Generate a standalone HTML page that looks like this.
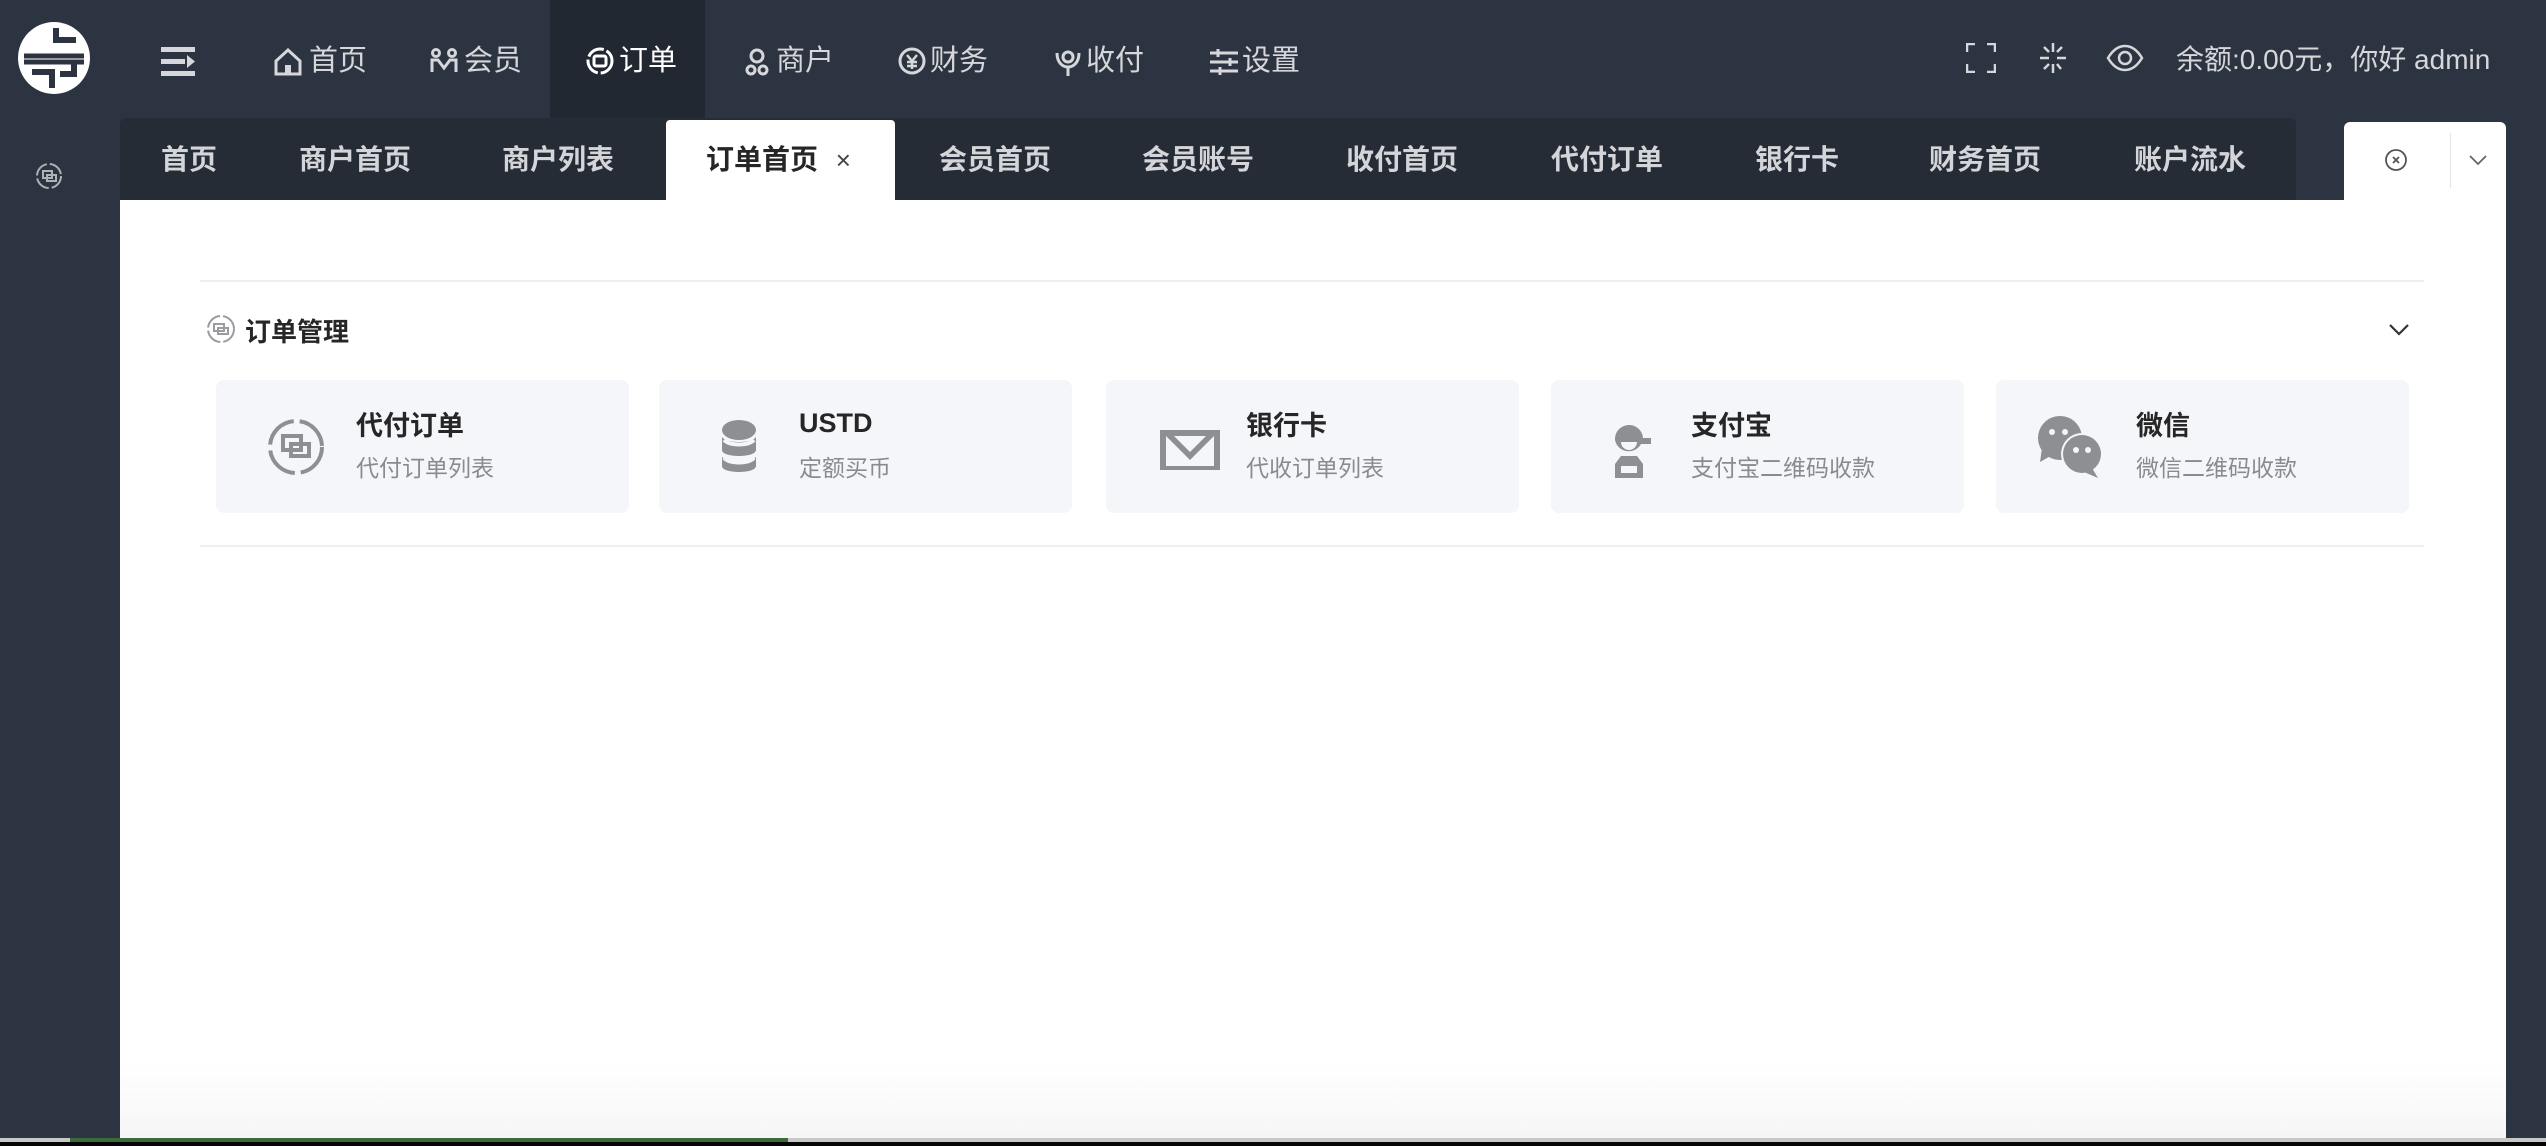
<!DOCTYPE html>
<html><head><meta charset="utf-8"><style>
*{margin:0;padding:0;box-sizing:border-box}
body{width:2546px;height:1146px;overflow:hidden;background:#2c3441;font-family:"Liberation Sans","Noto Sans CJK SC",sans-serif;position:relative}
.a{position:absolute}
.nav{top:0;height:118px;color:#d6d7da;font-size:29px;line-height:118px}
.nav svg{position:absolute;top:44px}
.tabbar{left:120px;top:118px;width:2176px;height:82px;background:#262c36;border-radius:6px 6px 0 0}
.tab{position:absolute;top:119px;height:82px;line-height:82px;color:#d3d5d9;font-size:28px;font-weight:bold}
.content{left:120px;top:200px;width:2386px;height:938px;background:linear-gradient(#fff 92%,#f6f6f6)}
.card{position:absolute;top:380px;width:413px;height:133px;background:#f5f6f9;border-radius:8px}
.card .t{position:absolute;left:140px;top:24px;font-size:27px;font-weight:bold;color:#262626}
.card .s{position:absolute;left:140px;top:69px;font-size:23px;color:#8a8b8f}
.card svg{position:absolute;left:50px;top:36px}
</style></head><body>
<!-- logo -->
<svg class="a" style="left:16px;top:20px" width="76" height="76" viewBox="0 0 76 76"><circle cx="38" cy="38" r="36" fill="#fff"/><path d="M8 36H68M8 42H68" stroke="#2c3441" stroke-width="5"/><path d="M40 8v12h20M36 68V52H16" stroke="#2c3441" stroke-width="6" fill="none"/><path d="M58 44v10H44" stroke="#2c3441" stroke-width="6" fill="none"/></svg>
<!-- sidebar icon -->
<svg class="a" style="left:34px;top:161px" width="30" height="30" viewBox="0 0 30 30"><circle cx="15" cy="15" r="12" fill="none" stroke="#aeb1b6" stroke-width="2" stroke-dasharray="16 3"/><rect x="9" y="10" width="9" height="7" fill="none" stroke="#aeb1b6" stroke-width="2"/><rect x="13" y="14" width="9" height="6" fill="none" stroke="#aeb1b6" stroke-width="2"/></svg>
<!-- top nav -->
<div class="a" style="left:550px;top:0;width:155px;height:118px;background:#222832"></div>
<svg class="a" style="left:161px;top:47px" width="35" height="29" viewBox="0 0 35 29"><rect y="0" width="34" height="5" fill="#d6d7da"/><rect y="12" width="24" height="5" fill="#d6d7da"/><rect y="24" width="34" height="5" fill="#d6d7da"/><path d="M26 8l8 6.5-8 6.5z" fill="#d6d7da"/></svg>
<div class="a nav" style="left:273px;width:120px;top:2px"><svg style="left:0;top:46px" width="30" height="28" viewBox="0 0 30 28"><path d="M3 13L15 2l12 11v13H3z" fill="none" stroke="#d6d7da" stroke-width="3"/><rect x="12" y="17" width="6" height="9" fill="#d6d7da"/></svg><span style="margin-left:36px">首页</span></div>
<div class="a nav" style="left:430px;width:120px;top:2px"><svg style="left:0;top:46px" width="28" height="26" viewBox="0 0 28 26"><circle cx="6" cy="5" r="3.5" fill="none" stroke="#d6d7da" stroke-width="3"/><circle cx="22" cy="5" r="3.5" fill="none" stroke="#d6d7da" stroke-width="3"/><path d="M2 24V12h6l6 8 6-8h6v12" fill="none" stroke="#d6d7da" stroke-width="3"/></svg><span style="margin-left:34px">会员</span></div>
<div class="a nav" style="left:586px;width:120px;color:#fff;top:2px"><svg style="left:0;top:45px" width="28" height="28" viewBox="0 0 28 28"><circle cx="14" cy="14" r="12" fill="none" stroke="#fff" stroke-width="3" stroke-dasharray="18 3"/><rect x="8" y="9" width="12" height="10" rx="2" fill="none" stroke="#fff" stroke-width="3"/></svg><span style="margin-left:33px">订单</span></div>
<div class="a nav" style="left:745px;width:120px;top:2px"><svg style="left:0;top:46px" width="24" height="28" viewBox="0 0 24 28"><circle cx="12" cy="8" r="6" fill="none" stroke="#d6d7da" stroke-width="3"/><circle cx="6" cy="22" r="4" fill="none" stroke="#d6d7da" stroke-width="3"/><circle cx="18" cy="22" r="4" fill="none" stroke="#d6d7da" stroke-width="3"/></svg><span style="margin-left:31px">商户</span></div>
<div class="a nav" style="left:898px;width:120px;top:2px"><svg style="left:0;top:45px" width="28" height="28" viewBox="0 0 28 28"><circle cx="14" cy="14" r="12" fill="none" stroke="#d6d7da" stroke-width="3"/><path d="M9 8l5 6 5-6M14 14v8M9 15h10M9 19h10" stroke="#d6d7da" stroke-width="2.5" fill="none"/></svg><span style="margin-left:32px">财务</span></div>
<div class="a nav" style="left:1054px;width:120px;top:2px"><svg style="left:0;top:45px" width="28" height="30" viewBox="0 0 28 30"><circle cx="14" cy="10" r="5" fill="none" stroke="#d6d7da" stroke-width="3"/><path d="M3 6c0 10 6 14 11 14s11-4 11-14M14 20v9" stroke="#d6d7da" stroke-width="3" fill="none"/></svg><span style="margin-left:32px">收付</span></div>
<div class="a nav" style="left:1210px;width:120px;top:2px"><svg style="left:0;top:47px" width="28" height="26" viewBox="0 0 28 26"><path d="M0 4h28M0 13h28M0 22h28" stroke="#d6d7da" stroke-width="3"/><path d="M8 0v8M20 9v8M10 18v8" stroke="#d6d7da" stroke-width="3"/></svg><span style="margin-left:32px">设置</span></div>
<!-- right header -->
<svg class="a" style="left:1966px;top:43px" width="30" height="30" viewBox="0 0 30 30" fill="none" stroke="#d6d7da" stroke-width="2.5"><path d="M1 9V1h8M21 1h8v8M29 21v8h-8M9 29H1v-8"/></svg>
<svg class="a" style="left:2038px;top:42px" width="30" height="32" viewBox="0 0 30 32" stroke="#d6d7da" stroke-width="2.5"><path d="M15 1v9M15 22v9M2 16h9M19 16h9M6 5l5 5M19 22l4 5M24 5l-5 5M6 27l5-5"/></svg>
<svg class="a" style="left:2106px;top:44px" width="38" height="28" viewBox="0 0 38 28" fill="none" stroke="#d6d7da" stroke-width="2.5"><path d="M2 14C8 4 14 2 19 2s11 2 17 12c-6 10-12 12-17 12S8 24 2 14z"/><circle cx="19" cy="14" r="6"/></svg>
<div class="a nav" style="left:2176px;top:1px;font-size:28px;color:#d6d7da;white-space:nowrap">余额:0.00元，你好 admin</div>
<!-- tabs -->
<div class="a tabbar"></div>
<div class="a" style="left:666px;top:120px;width:229px;height:80px;background:#fff;border-radius:4px 4px 0 0"></div>
<div class="tab" style="left:161px">首页</div>
<div class="tab" style="left:299px">商户首页</div>
<div class="tab" style="left:502px">商户列表</div>
<div class="tab" style="left:706px;color:#262626">订单首页 <span style="font-weight:normal;font-size:26px;margin-left:10px;color:#444">×</span></div>
<div class="tab" style="left:939px">会员首页</div>
<div class="tab" style="left:1142px">会员账号</div>
<div class="tab" style="left:1346px">收付首页</div>
<div class="tab" style="left:1551px">代付订单</div>
<div class="tab" style="left:1755px">银行卡</div>
<div class="tab" style="left:1929px">财务首页</div>
<div class="tab" style="left:2134px">账户流水</div>
<div class="a" style="left:2344px;top:122px;width:162px;height:78px;background:#fff;border-radius:6px 6px 0 0"></div>
<div class="a" style="left:2450px;top:133px;width:1px;height:55px;background:#e5e5e5"></div>
<svg class="a" style="left:2384px;top:148px" width="24" height="24" viewBox="0 0 24 24" fill="none" stroke="#555" stroke-width="1.8"><circle cx="12" cy="12" r="10"/><path d="M9 9l6 6M15 9l-6 6"/></svg>
<svg class="a" style="left:2468px;top:154px" width="20" height="12" viewBox="0 0 20 12" fill="none" stroke="#666" stroke-width="1.8"><path d="M2 2l8 8 8-8"/></svg>
<!-- content -->
<div class="a content"></div>
<div class="a" style="left:200px;top:280px;width:2224px;height:2px;background:#eeeff1"></div>
<svg class="a" style="left:205px;top:313px" width="32" height="32" viewBox="0 0 32 32" fill="none" stroke="#9a9ca0" stroke-width="2"><circle cx="16" cy="16" r="13" stroke-dasharray="18 3"/><rect x="9" y="11" width="10" height="7"/><rect x="13" y="15" width="10" height="6"/></svg>
<div class="a" style="left:245px;top:312px;font-size:26px;font-weight:bold;color:#262626">订单管理</div>
<svg class="a" style="left:2388px;top:323px" width="22" height="14" viewBox="0 0 22 14" fill="none" stroke="#333" stroke-width="2.2"><path d="M2 2l9 9 9-9"/></svg>
<div class="card" style="left:216px"><svg width="60" height="62" viewBox="0 0 60 62" fill="none" stroke="#8e8f93" stroke-width="4"><circle cx="30" cy="31" r="26" stroke-dasharray="36 6"/><rect x="17" y="20" width="18" height="14"/><rect x="25" y="28" width="18" height="12"/></svg><div class="t">代付订单</div><div class="s">代付订单列表</div></div>
<div class="card" style="left:659px"><svg width="60" height="62" viewBox="0 0 60 62"><g fill="#8e8f93"><ellipse cx="30" cy="14" rx="17" ry="10"/><path d="M13 20c0 8 34 8 34 0v14c0 8-34 8-34 0z"/><path d="M13 40c0 8 34 8 34 0v10c0 8-34 8-34 0z"/></g><path d="M15 24c6 6 24 6 30 0M15 42c6 6 24 6 30 0" stroke="#f5f6f9" stroke-width="4" fill="none"/></svg><div class="t" style="top:28px">USTD</div><div class="s">定额买币</div></div>
<div class="card" style="left:1106px"><svg width="64" height="62" viewBox="0 0 64 62"><rect x="4" y="14" width="60" height="40" fill="#8e8f93"/><path d="M10 20h48v30H10z" fill="#f5f6f9"/><path d="M10 20l24 24 24-24z" fill="#8e8f93"/><path d="M18 20l16 16 16-16z" fill="#f5f6f9"/></svg><div class="t">银行卡</div><div class="s">代收订单列表</div></div>
<div class="card" style="left:1551px"><svg width="60" height="62" viewBox="0 0 60 62"><g fill="#8e8f93"><path d="M14 24a14 14 0 1 1 28-2h8v6H40a14 14 0 0 1-26-4z"/><path d="M14 62V48l6-8h16l6 8v14z"/></g><path d="M20 26a8 8 0 0 0 16 0z" fill="#f5f6f9"/><rect x="20" y="50" width="16" height="7" fill="#f5f6f9"/></svg><div class="t">支付宝</div><div class="s">支付宝二维码收款</div></div>
<div class="card" style="left:1996px"><svg width="76" height="66" viewBox="0 0 76 66" style="left:40px;top:34px"><g fill="#8e8f93"><ellipse cx="24" cy="24" rx="22" ry="22"/><path d="M6 34l-2 14 14-8z"/></g><circle cx="46" cy="40" r="21" fill="#f5f6f9"/><g fill="#8e8f93"><circle cx="46" cy="40" r="19"/><path d="M56 54l6 10-14-6z"/></g><g fill="#f5f6f9"><circle cx="16" cy="18" r="3"/><circle cx="29" cy="18" r="3"/><circle cx="40" cy="36" r="3"/><circle cx="52" cy="36" r="3"/></g></svg><div class="t">微信</div><div class="s">微信二维码收款</div></div>
<div class="a" style="left:200px;top:545px;width:2224px;height:2px;background:#eeeff1"></div>
<!-- bottom strip -->
<div class="a" style="left:0;top:1138px;width:2546px;height:4px;background:#c8c8c8"></div>
<div class="a" style="left:70px;top:1138px;width:718px;height:4px;background:#3b6b3a"></div>
<div class="a" style="left:0;top:1142px;width:2546px;height:4px;background:#050505"></div>
</body></html>
